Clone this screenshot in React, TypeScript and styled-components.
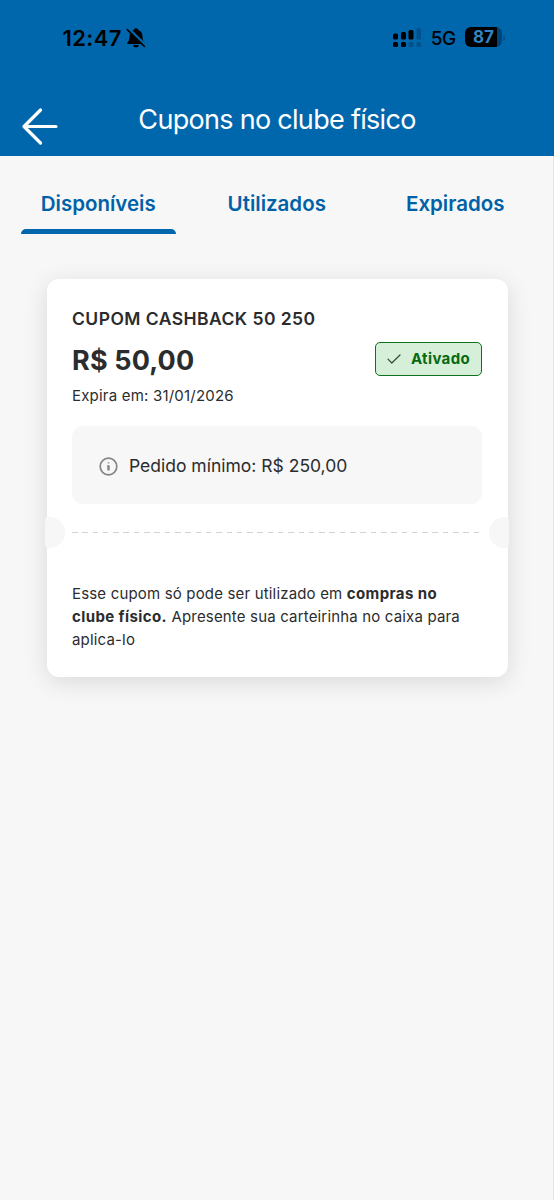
import React from "react";
import styled, { createGlobalStyle } from "styled-components";

const GlobalStyle = createGlobalStyle`
  *, *::before, *::after { box-sizing: border-box; }
  html, body { margin: 0; padding: 0; background: #f7f7f7; }
  body {
    font-family: Inter, "Liberation Sans", sans-serif;
    color: #2b2c2e;
    -webkit-font-smoothing: antialiased;
  }
`;

const Screen = styled.div`
  width: 100%;
  max-width: 554px;
  min-height: 1200px;
  background: #f7f7f7;
  border-right: 1px solid #e6e6e6;
`;

const Header = styled.header`
  height: 156px;
  margin-right: -1px;
  background: #0067ad;
  display: flex;
  flex-direction: column;
`;

const StatusBar = styled.div`
  height: 76px;
  padding: 0 49px 0 62.5px;
  display: flex;
  align-items: center;
  justify-content: space-between;
  color: #000;
`;

const StatusGroup = styled.div<{ $gap: number }>`
  display: flex;
  align-items: center;
  gap: ${(p) => p.$gap}px;
`;

const Clock = styled.span`
  font-size: 22px;
  line-height: 26px;
  font-weight: 600;
  letter-spacing: 0.4px;
`;

const Network = styled.span`
  font-size: 19px;
  line-height: 24px;
  font-weight: 500;
  letter-spacing: -0.3px;
  margin-top: 1px;
`;

const Battery = styled.div`
  display: flex;
  align-items: center;
  gap: 1px;
`;

const BatteryBody = styled.div`
  width: 37px;
  height: 20px;
  margin-top: -2px;
  border-radius: 6px;
  background: linear-gradient(to right, #000 31.5px, #00457a 31.5px);
  color: #3484c4;
  font-size: 17px;
  line-height: 20px;
  font-weight: 700;
  text-align: center;
`;

const BatteryTip = styled.div`
  width: 2px;
  height: 6px;
  border-radius: 0 2px 2px 0;
  background: #00528c;
`;

const TitleBar = styled.div`
  flex: 1;
  display: grid;
  grid-template-columns: 60px 1fr 60px;
  align-items: center;
  padding-left: 20px;
  padding-right: 20px;
`;

const BackButton = styled.button`
  width: 40px;
  height: 40px;
  margin-top: 19px;
  padding: 0;
  border: 0;
  background: none;
  display: flex;
`;

const Title = styled.h1`
  margin: 8px 0 0;
  color: #fff;
  font-size: 27px;
  line-height: 34px;
  font-weight: 400;
  letter-spacing: -0.7px;
  text-align: center;
  white-space: nowrap;
`;

const Tabs = styled.nav`
  display: grid;
  grid-template-columns: repeat(3, 154.5px);
  column-gap: 24px;
  padding: 24px 0 0 21px;
`;

const Tab = styled.button<{ $active?: boolean }>`
  height: 54px;
  padding: 10px 0 0;
  border: 0;
  background: none;
  display: flex;
  flex-direction: column;
  justify-content: space-between;
  align-items: center;
  color: #0061a8;
  font-family: inherit;
  font-size: 20.5px;
  line-height: 28px;
  font-weight: 600;

  &::after {
    content: "";
    width: 100%;
    height: 5px;
    border-radius: 6px 6px 0 0;
    background: ${(p) => (p.$active ? "#0067ad" : "transparent")};
  }
`;

const Coupon = styled.article`
  width: 461px;
  height: 398px;
  margin: 45px 0 0 46.5px;
  padding: 27px 25.5px 0;
  border-radius: 12px;
  background: #fff;
  box-shadow: 0 5px 24px rgba(0, 0, 0, 0.12);
`;

const CouponName = styled.h2`
  margin: 0;
  font-size: 17.5px;
  line-height: 26px;
  font-weight: 600;
  letter-spacing: 0.45px;
`;

const AmountRow = styled.div`
  display: flex;
  align-items: center;
  justify-content: space-between;
  height: 40px;
  margin-top: 7px;
`;

const Amount = styled.strong`
  margin-top: 3px;
  font-size: 27px;
  line-height: 40px;
  font-weight: 700;
  letter-spacing: 0.15px;
`;

const Badge = styled.span`
  width: 107.5px;
  height: 34px;
  margin-top: -1px;
  padding: 0 11px;
  border: 1.5px solid #10701c;
  border-radius: 5px;
  background: #d6efd8;
  color: #086a10;
  display: flex;
  align-items: center;
  justify-content: space-between;
  font-size: 15px;
  font-weight: 700;
  line-height: 20px;
  letter-spacing: 0.35px;
`;

const Expiry = styled.p`
  margin: 5px 0 0;
  font-size: 15px;
  line-height: 24px;
  letter-spacing: 0.2px;
`;

const Minimum = styled.div`
  height: 78px;
  margin-top: 18px;
  padding: 2px 0 0 26.5px;
  border-radius: 11px;
  background: #f7f7f7;
  display: flex;
  align-items: center;
  gap: 11.5px;
  font-size: 17.5px;
  line-height: 24px;
`;

const Perforation = styled.div`
  height: 31px;
  margin: 13px -27px 0;
  display: flex;
  align-items: center;
  justify-content: space-between;
`;

const Notch = styled.span<{ $side: "left" | "right" }>`
  width: 20px;
  height: 31px;
  background: #f7f7f7;
  border-radius: ${(p) => (p.$side === "left" ? "4px 16px 16px 4px" : "16px 4px 4px 16px")};
`;

const DashLine = styled.span`
  width: 408px;
  height: 1px;
  margin-left: -3px;
  background: repeating-linear-gradient(to right, #d2d2d2 0 5.5px, transparent 5.5px 10.3px);
`;

const Terms = styled.p`
  margin: 34px 10px 0 0;
  font-size: 15px;
  line-height: 23.2px;
  letter-spacing: 0.17px;

  b {
    letter-spacing: 0.4px;
  }
`;

function BellOff() {
  return (
    <svg width="20" height="22" viewBox="0 0 20 22">
      <path
        d="M10 1.2c1.3 0 2.1.8 2.3 1.8 2.8.9 4 3.2 4.2 6.4.1 3.2.7 4.7 2 6 .6.7.3 1.6-.7 1.6H2.2c-1 0-1.3-.9-.7-1.6 1.3-1.3 1.9-2.8 2-6 .2-3.2 1.4-5.5 4.2-6.4.2-1 1-1.800 2.300-1.800z"
        fill="#000"
      />
      <path d="M7 18h6c-.3 1.5-1.5 2.5-3 2.5S7.3 19.5 7 18z" fill="#000" />
      <path d="M2 1.8L19.5 18.8" stroke="#0067ad" strokeWidth="3.6" />
      <path d="M1.2 2.6L18.4 19.4" stroke="#000" strokeWidth="1.5" strokeLinecap="round" />
    </svg>
  );
}

function Signal() {
  return (
    <svg width="30" height="20" viewBox="0 0 30 20">
      <g fill="#000">
        <rect x="1" y="5.5" width="5" height="6" rx="1.5" />
        <rect x="9" y="4" width="5" height="7.5" rx="1.5" />
        <rect x="16.5" y="2" width="5" height="9.5" rx="1.5" />
        <rect x="1" y="14" width="5" height="5" rx="1.5" />
        <rect x="9" y="14" width="5" height="5" rx="1.5" />
      </g>
      <g fill="#00508a">
        <rect x="24.5" y="0" width="4.5" height="11.5" rx="1.5" />
        <rect x="16.5" y="14" width="5" height="5" rx="1.5" />
        <rect x="24.5" y="14" width="4.5" height="5" rx="1.5" />
      </g>
    </svg>
  );
}

function BackArrow() {
  return (
    <svg width="40" height="40" viewBox="0 0 40 40" fill="none" stroke="#fff" strokeWidth="3.2" strokeLinecap="round" strokeLinejoin="round">
      <path d="M20.5 4L4 20.5l16.5 16.5M4 20.5h32" />
    </svg>
  );
}

function Check() {
  return (
    <svg width="14" height="10" viewBox="0 0 14 10" fill="none" stroke="#2f4a33" strokeWidth="1.2" strokeLinecap="round" strokeLinejoin="round">
      <path d="M1 5.2l3.8 3.8L13 1" />
    </svg>
  );
}

function Info() {
  return (
    <svg width="19" height="19" viewBox="0 0 19 19">
      <circle cx="9.5" cy="9.5" r="8.3" fill="none" stroke="#858585" strokeWidth="1.7" />
      <circle cx="9.5" cy="5.8" r="1.1" fill="#b5b5b5" />
      <path d="M7.8 8.8h1.7" stroke="#b5b5b5" strokeWidth="1" />
      <path d="M9.5 8.3v5.2" stroke="#858585" strokeWidth="2.4" />
    </svg>
  );
}

export default function App() {
  return (
    <Screen>
      <GlobalStyle />
      <Header>
        <StatusBar>
          <StatusGroup $gap={4}>
            <Clock>12:47</Clock>
            <BellOff />
          </StatusGroup>
          <StatusGroup $gap={9}>
            <Signal />
            <Network>5G</Network>
            <Battery>
              <BatteryBody>87</BatteryBody>
              <BatteryTip />
            </Battery>
          </StatusGroup>
        </StatusBar>
        <TitleBar>
          <BackButton aria-label="Voltar">
            <BackArrow />
          </BackButton>
          <Title>Cupons no clube físico</Title>
        </TitleBar>
      </Header>
      <Tabs>
        <Tab $active>Disponíveis</Tab>
        <Tab>Utilizados</Tab>
        <Tab>Expirados</Tab>
      </Tabs>
      <Coupon>
        <CouponName>CUPOM CASHBACK 50 250</CouponName>
        <AmountRow>
          <Amount>R$ 50,00</Amount>
          <Badge>
            <Check />
            Ativado
          </Badge>
        </AmountRow>
        <Expiry>Expira em: 31/01/2026</Expiry>
        <Minimum>
          <Info />
          Pedido mínimo: R$ 250,00
        </Minimum>
        <Perforation>
          <Notch $side="left" />
          <DashLine />
          <Notch $side="right" />
        </Perforation>
        <Terms>
          Esse cupom só pode ser utilizado em <b>compras no clube físico.</b> Apresente sua carteirinha no caixa para
          aplica-lo
        </Terms>
      </Coupon>
    </Screen>
  );
}
